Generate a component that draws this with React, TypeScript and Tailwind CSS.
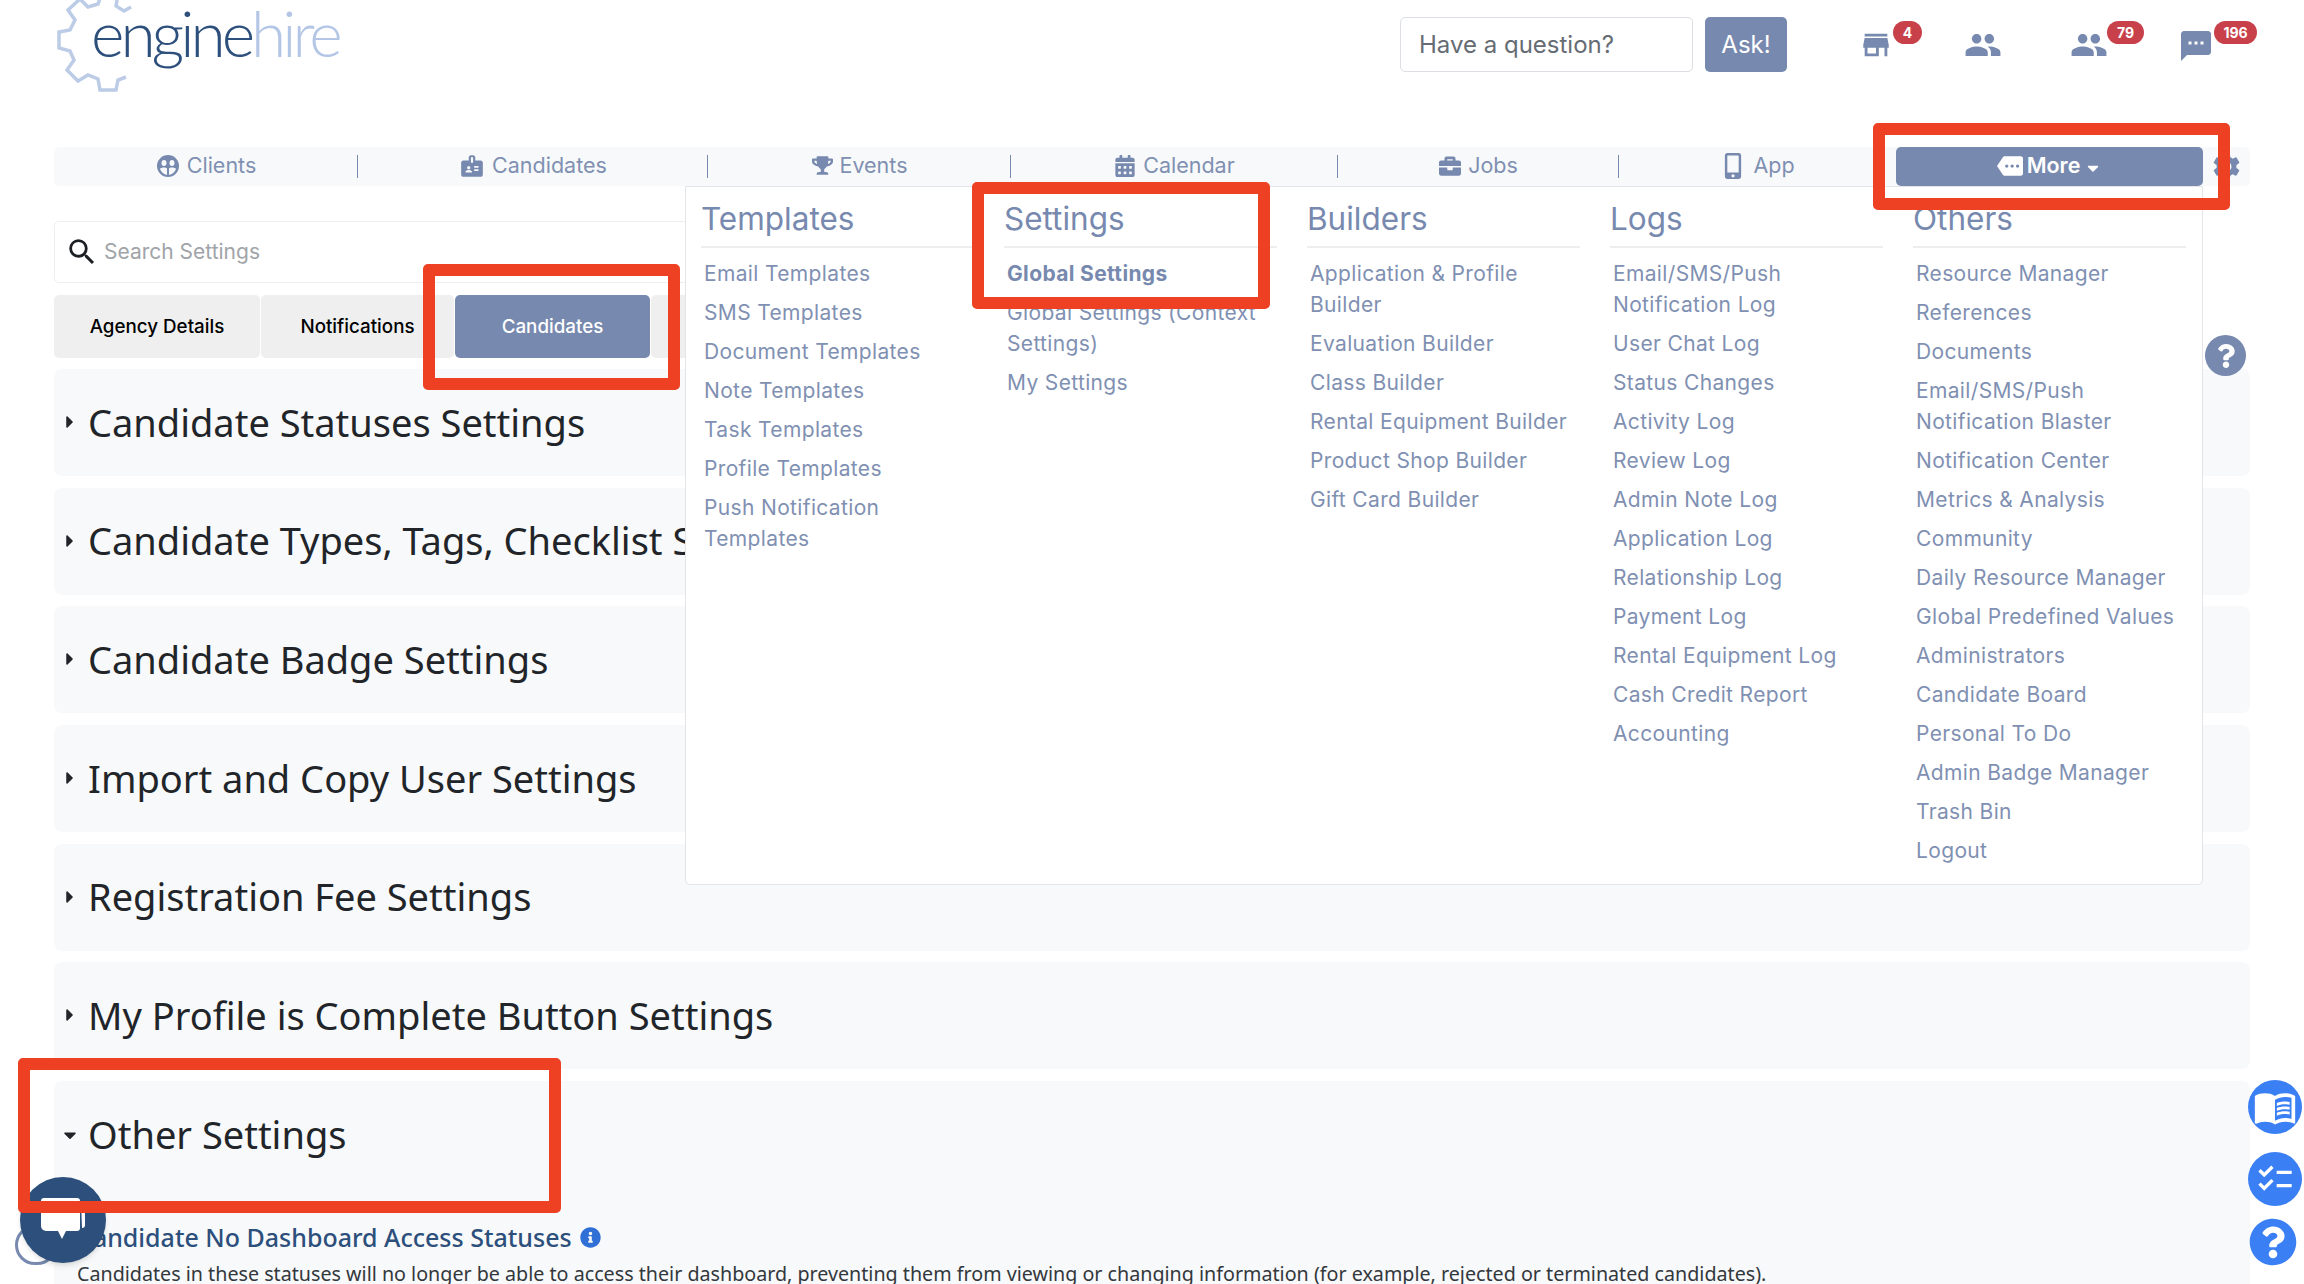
import { FaBriefcase, FaCalendarAlt, FaCaretDown, FaCaretRight, FaInfoCircle, FaMobileAlt, FaQuestion, FaQuestionCircle, FaTrophy } from 'react-icons/fa'
import { MdBadge, MdChecklist, MdMenuBook, MdMore, MdPeople, MdSearch, MdSettings, MdSms, MdStore } from 'react-icons/md'

const sans = "font-['Inter','Noto_Sans',sans-serif]"

function ClientsIcon() {
  return (
    <svg viewBox="0 0 24 24" className="w-[24px] h-[24px]" fill="#7789ae">
      <path d="M12 1a11 11 0 1 0 0 22 11 11 0 0 0 0-22zM8 6a2.500 3 0 1 1 0 6 2.500 3 0 0 1 0-6zm8 0a2.500 3 0 1 1 0 6 2.500 3 0 0 1 0-6zM4 15c1-2 6-2 7-.5V21c-3-.6-6-3-7-6zm9 6v-6.500c1-1.500 6-1.500 7 .5-1 3-4 5.400-7 6z" fillRule="evenodd" />
    </svg>
  )
}

const navItems = [
  { label: 'Clients', width: 'w-[304px]', icon: <ClientsIcon /> },
  { label: 'Candidates', width: 'w-[350px]', icon: <MdBadge size={26} /> },
  { label: 'Events', width: 'w-[303px]', icon: <FaTrophy size={21} /> },
  { label: 'Calendar', width: 'w-[327px]', icon: <FaCalendarAlt size={22} /> },
  { label: 'Jobs', width: 'w-[281px]', icon: <FaBriefcase size={22} /> },
  { label: 'App', width: 'w-[277px]', icon: <FaMobileAlt size={26} /> },
]

const menuColumns = [
  { title: 'Templates', items: ['Email Templates', 'SMS Templates', 'Document Templates', 'Note Templates', 'Task Templates', 'Profile Templates', 'Push Notification Templates'] },
  { title: 'Settings', items: ['Global Settings', 'Global Settings (Context Settings)', 'My Settings'] },
  { title: 'Builders', items: ['Application & Profile Builder', 'Evaluation Builder', 'Class Builder', 'Rental Equipment Builder', 'Product Shop Builder', 'Gift Card Builder'] },
  { title: 'Logs', items: ['Email/SMS/Push Notification Log', 'User Chat Log', 'Status Changes', 'Activity Log', 'Review Log', 'Admin Note Log', 'Application Log', 'Relationship Log', 'Payment Log', 'Rental Equipment Log', 'Cash Credit Report', 'Accounting'] },
  { title: 'Others', items: ['Resource Manager', 'References', 'Documents', 'Email/SMS/Push Notification Blaster', 'Notification Center', 'Metrics & Analysis', 'Community', 'Daily Resource Manager', 'Global Predefined Values', 'Administrators', 'Candidate Board', 'Personal To Do', 'Admin Badge Manager', 'Trash Bin', 'Logout'] },
]

const accordions = [
  'Candidate Statuses Settings',
  'Candidate Types, Tags, Checklist Settings',
  'Candidate Badge Settings',
  'Import and Copy User Settings',
  'Registration Fee Settings',
  'My Profile is Complete Button Settings',
]

function Logo() {
  return (
    <div className="relative w-[300px] h-[100px] ml-[56px]">
      <svg viewBox="0 0 100 100" className="absolute left-0 top-[-8px] w-[100px] h-[100px]" fill="none" stroke="#bccce6" strokeWidth="3.500">
        <path d="M75 15 L68 19 L60 14 L62 3 L46 1 L42 12 L32 15 L24 7 L12 18 L19 28 L14 38 L3 40 L3 56 L14 59 L18 68 L11 78 L22 89 L32 83 L42 87 L44 98 L60 98 L62 88 L70 85" />
      </svg>
      <div className="absolute left-[35px] top-[1px] font-['Lato',sans-serif] font-light text-[64px] leading-[64px] tracking-[-4px] text-[#2c4f7c] whitespace-nowrap">
        engine<span className="text-[#b4c6e6]">hire</span>
      </div>
    </div>
  )
}

function Badge({ text, className }: { text: string; className: string }) {
  return (
    <span className={`absolute top-[21px] h-[23px] rounded-full bg-[#c8404a] text-white text-[14px] font-bold flex items-center justify-center ${className}`}>
      {text}
    </span>
  )
}

function Callout({ className }: { className: string }) {
  return <div className={`absolute border-[12px] border-[#ee4023] rounded-[5px] ${className}`} />
}

export default function App() {
  return (
    <div className={`relative w-[2304px] h-[1284px] overflow-hidden bg-white ${sans}`}>
      {/* Header */}
      <header className="relative h-[147px] overflow-hidden">
        <Logo />
        <input
          placeholder="Have a question?"
          className="absolute left-[1400px] top-[17px] w-[293px] h-[55px] px-[18px] border border-[#dcdfe3] rounded-[5px] text-[24px] placeholder:text-[#666c73]"
        />
        <button className="absolute left-[1705px] top-[17px] w-[82px] h-[55px] rounded-[5px] bg-[#7789ae] text-white text-[24px]">Ask!</button>
        <div className="text-[#7789ae]">
          <MdStore size={34} className="absolute left-[1859px] top-[28px]" />
          <Badge text="4" className="left-[1893px] w-[29px]" />
          <MdPeople size={38} className="absolute left-[1964px] top-[26px]" />
          <MdPeople size={38} className="absolute left-[2070px] top-[26px]" />
          <Badge text="79" className="left-[2107px] w-[37px]" />
          <MdSms size={36} className="absolute left-[2178px] top-[28px]" />
          <Badge text="196" className="left-[2214px] w-[43px]" />
        </div>
      </header>

      {/* Main nav */}
      <nav className="flex items-center mx-[54px] h-[39px] bg-[#f8f9fa] rounded-[5px] text-[#7789ae] text-[21.500px]">
        {navItems.map((item, i) => (
          <div key={item.label} className={`relative flex items-center justify-center gap-[7px] h-full pb-[2px] ${item.width}`}>
            {item.icon}
            <span className="text-[#7f90b2]">{item.label}</span>
            {i < 5 && <span className="absolute right-0 top-[8px] h-[23px] w-[1.500px] bg-[#7789ae]" />}
          </div>
        ))}
        <button className="flex items-center justify-center gap-[4px] w-[307px] h-full pb-[2px] bg-[#7789ae] rounded-[5px] text-white font-semibold">
          <MdMore size={26} />
          More
          <FaCaretDown size={18} className="mt-[4px]" />
        </button>
        <MdSettings size={33} className="ml-[7px] text-[#7789ae]" />
      </nav>

      {/* Settings */}
      <main className="px-[54px]">
        <div className="flex items-center gap-[5px] w-[800px] h-[62px] mt-[35px] pl-[10px] border border-[#eceef0] rounded-[5px] text-[21px] text-[#a0a4a8]">
          <MdSearch size={34} className="text-[#1c1f23]" />
          <span>Search Settings</span>
        </div>
        <div className="flex gap-px h-[63px] mt-[12px] text-[18.800px] font-medium">
          <div className="w-[206px] flex items-center justify-center pt-[1px] rounded-[5px] bg-[#efefef] text-black">Agency Details</div>
          <div className="w-[193px] flex items-center justify-center pt-[1px] rounded-[5px] bg-[#efefef] text-black">Notifications</div>
          <div className="w-[195px] flex items-center justify-center pt-[1px] rounded-[5px] bg-[#7789ae] text-white">Candidates</div>
          <div className="w-[195px] rounded-[5px] bg-[#efefef]" />
        </div>
        <div className="flex flex-col gap-[11.700px] mt-[11px] font-['Noto_Sans',sans-serif] text-[#212529]">
          {accordions.map((title) => (
            <div key={title} className="flex items-center gap-[8px] h-[107px] pl-[6px] pb-[1px] bg-[#f8f9fa] rounded-[8px] text-[38px]">
              <FaCaretRight size={20} />
              <span className="whitespace-nowrap">{title}</span>
            </div>
          ))}
          <div className="h-[260px] bg-[#f8f9fa] rounded-[8px]">
            <div className="flex items-center gap-[8px] h-[107px] pl-[6px] text-[38px]">
              <FaCaretDown size={20} />
              <span className="leading-[50px] pb-[2px]">Other Settings</span>
            </div>
            <div className="flex items-center gap-[8px] mt-[32px] pl-[23px] text-[25px] leading-[34px] font-medium text-[#2c4f7c]">
              Candidate No Dashboard Access Statuses
              <FaInfoCircle size={21} className="text-[#2f6fd6]" />
            </div>
            <p className="mt-[10px] pl-[23px] text-[19.700px] leading-[20px] text-[#33383d]">
              Candidates in these statuses will no longer be able to access their dashboard, preventing them from viewing or changing information (for example, rejected or terminated candidates).
            </p>
          </div>
        </div>
      </main>

      {/* Open "More" menu */}
      <div className="absolute left-[685px] top-[186px] w-[1518px] h-[699px] flex gap-[30px] px-[15px] bg-white border border-[#e3e5e8] rounded-b-[5px]">
        {menuColumns.map((col) => (
          <div key={col.title} className="w-[273px]">
            <h3 className="h-[61px] pt-[12px] border-b-2 border-[#eceef0] text-[31.500px] leading-[40px] text-[#7789ae]">{col.title}</h3>
            <ul className="pt-[5.500px] pl-[3px] text-[21px] tracking-[0.350px] leading-[31px] text-[#7f90b2]">
              {col.items.map((item) => (
                <li key={item} className={`py-[4px] ${item === 'Global Settings' ? 'font-bold text-[#7789ae]' : ''}`}>{item}</li>
              ))}
            </ul>
          </div>
        ))}
      </div>

      {/* Help button beside the menu */}
      <div className="absolute left-[2205px] top-[335px] w-[41px] h-[41px] rounded-full bg-[#7789ae] flex items-center justify-center text-white">
        <FaQuestion size={24} />
      </div>

      {/* Chat launcher */}
      <div className="absolute left-[15px] top-[1225px] w-[42px] h-[40px] rounded-full border-[3px] border-[#7789ae]" />
      <div className="absolute left-[20px] top-[1177px] w-[86px] h-[86px] rounded-full bg-[#2c4f7c] shadow-md" />
      <svg viewBox="0 0 44 44" className="absolute left-[41px] top-[1198px] w-[44px] h-[44px]" fill="white">
        <path d="M40 4h2a2 2 0 0 1 2 2v22a3 3 0 0 1-3 2z" />
        <path d="M3 0h33a3 3 0 0 1 3 3v27a3 3 0 0 1-3 3H25l-4 8-4-8H5a5 5 0 0 1-5-5V3a3 3 0 0 1 3-3z" />
      </svg>

      {/* Red annotation boxes */}
      <Callout className="left-[423px] top-[264px] w-[257px] h-[126px]" />
      <Callout className="left-[972px] top-[182px] w-[298px] h-[127px]" />
      <Callout className="left-[1873px] top-[123px] w-[357px] h-[87px]" />
      <Callout className="left-[18px] top-[1058px] w-[543px] h-[155px]" />

      {/* Floating helpers on the right edge */}
      <div className="absolute left-[2248px] top-[1080px] w-[54px] h-[54px] rounded-full bg-[#3b7ff5] flex items-center justify-center text-white">
        <MdMenuBook size={44} />
      </div>
      <div className="absolute left-[2248px] top-[1152px] w-[54px] h-[54px] rounded-full bg-[#3b7ff5] flex items-center justify-center text-white">
        <MdChecklist size={40} />
      </div>
      <FaQuestionCircle size={48} className="absolute left-[2249px] top-[1218px] text-[#3b7ff5]" />
    </div>
  )
}
